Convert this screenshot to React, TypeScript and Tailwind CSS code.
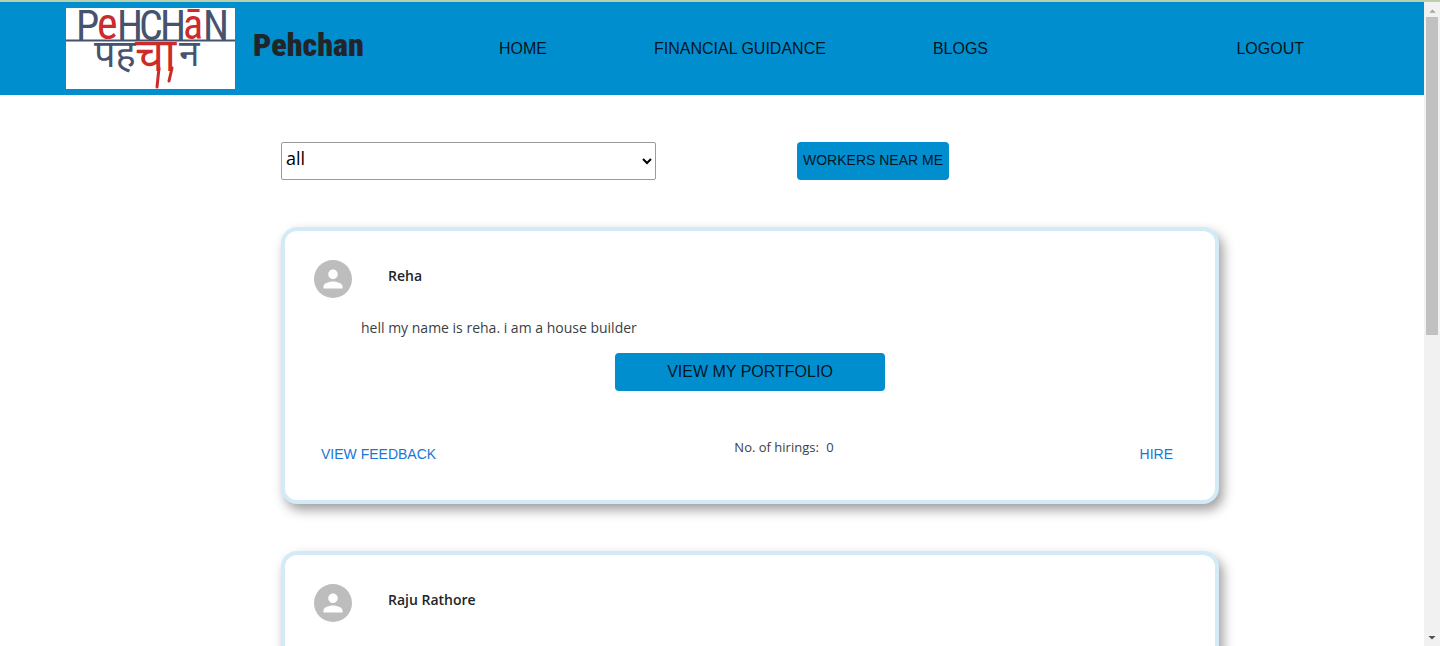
import React from "react";

type Worker = { name: string; bio: string; hirings: number };

const workers: Worker[] = [
  { name: "Reha", bio: "hell my name is reha. i am a house builder", hirings: 0 },
  { name: "Raju Rathore", bio: "", hirings: 0 },
];

function Logo() {
  return (
    <svg viewBox="0 0 169 81" className="h-[81px] w-[169px] shrink-0 overflow-visible bg-white" role="img" aria-label="Pehchan logo">
      <g fontFamily="'Roboto Condensed', Roboto, sans-serif" fontSize="42" fill="#46536f">
        <text x="10" y="32">P</text>
        <text x="31" y="31" fill="#cc2b2b" fontSize="44">e</text>
        <text x="51" y="32">H</text>
        <text x="73" y="32">C</text>
        <text x="94" y="32">H</text>
        <text x="117" y="31" fill="#cc2b2b" fontSize="42">ā</text>
        <text x="137" y="32">N</text>
      </g>
      <path d="M0 32.5H169" stroke="#46536f" strokeWidth="2" />
      <g fontFamily="'Noto Sans', sans-serif" fill="#46536f">
        <text x="28" y="59" fontSize="38">पह</text>
        <text x="69" y="63" fontSize="46" fill="#cc2b2b">चा</text>
        <text x="113" y="58" fontSize="37">न</text>
      </g>
      <path d="M93 60L91 79M106 60L103 73" fill="none" stroke="#cc2b2b" strokeWidth="3" strokeLinecap="round" />
    </svg>
  );
}

function Avatar() {
  return (
    <svg viewBox="0 0 40 40" className="size-[38px] shrink-0" aria-hidden="true">
      <circle cx="20" cy="20" r="20" fill="#bdbdbd" />
      <path
        transform="translate(5 5) scale(1.25)"
        fill="#fff"
        d="M12 12c2.21 0 4-1.79 4-4s-1.79-4-4-4-4 1.79-4 4 1.79 4 4 4zm0 2c-2.67 0-8 1.34-8 4v2h16v-2c0-2.66-5.33-4-8-4z"
      />
    </svg>
  );
}

function WorkerCard({ name, bio, hirings }: Worker) {
  return (
    <article className="flex min-h-[277px] shrink-0 flex-col rounded-2xl border-4 border-[#d2ebf7] bg-white px-[29px] pt-[29px] pb-[31px] shadow-[4px_6px_12px_rgba(0,0,0,0.38)]">
      <header className="flex gap-9">
        <Avatar />
        <h2 className="pt-1 text-sm leading-6 font-semibold text-[#212529]">{name}</h2>
      </header>
      <p className="min-h-6 pt-[18px] pl-[47px] text-sm leading-6 text-[#3a3f45]">{bio}</p>
      <button className="mt-[13px] h-[38px] w-[270px] self-center rounded bg-[#008ecf] font-['Liberation_Sans',Arial,sans-serif] text-base text-black/87">
        VIEW MY PORTFOLIO
      </button>
      <footer className="mt-auto grid grid-cols-3 items-center font-['Liberation_Sans',Arial,sans-serif] text-sm text-[#1976d2]">
        <button className="justify-self-start px-[7px]">VIEW FEEDBACK</button>
        <p className="pb-3 pl-[68px] text-center font-['Open_Sans',sans-serif] text-[13px] text-[#3a3f45]">
          No. of hirings: <span className="pl-1">{hirings}</span>
        </p>
        <button className="justify-self-end px-[13px]">HIRE</button>
      </footer>
    </article>
  );
}

function ScrollTrack() {
  return (
    <div className="flex w-4 shrink-0 flex-col items-center bg-[#f1f1f1]" aria-hidden="true">
      <svg viewBox="0 0 16 16" className="size-[15px]"><path d="M4.500 11.500h7L8 8z" fill="#a3a3a3" /></svg>
      <div className="h-[318px] w-3 bg-[#c1c1c1]" />
      <svg viewBox="0 0 16 16" className="mt-auto size-4"><path d="M4.500 6h7L8 9.500z" fill="#505050" /></svg>
    </div>
  );
}

export default function App() {
  return (
    <div className="flex h-screen flex-col overflow-hidden bg-white font-['Open_Sans',sans-serif]">
      <div className="h-0.5 shrink-0 bg-[#b9cfae]" />
      <div className="flex min-h-0 flex-1">
        <div className="flex min-w-0 flex-1 flex-col overflow-hidden">
          <header className="flex h-[93px] shrink-0 items-center bg-[#008ecf] pr-[120px] pl-[66px] font-['Liberation_Sans',Arial,sans-serif] text-base text-black/87">
            <Logo />
            <h1 className="w-[264px] pb-2 pl-[18px] font-['Roboto_Condensed',sans-serif] text-[32px] leading-10 font-black text-[#212529]">
              Pehchan
            </h1>
            <nav className="flex flex-1 gap-[107px]">
              <a href="#home">HOME</a>
              <a href="#guidance">FINANCIAL GUIDANCE</a>
              <a href="#blogs">BLOGS</a>
              <a href="#logout" className="ml-auto">LOGOUT</a>
            </nav>
          </header>
          <main className="ml-[281px] flex max-w-[938px] flex-col gap-[47px] pt-[47px]">
            <div className="flex items-center gap-[141px]">
              <select aria-label="Worker category" className="h-[38px] w-[375px] rounded-xs border border-[#9a9a9a] bg-white pb-1.5 text-lg text-black">
                <option>all</option>
              </select>
              <button className="h-[38px] rounded bg-[#008ecf] px-1.5 pb-0.5 font-['Liberation_Sans',Arial,sans-serif] text-sm text-black/87">
                WORKERS NEAR ME
              </button>
            </div>
            {workers.map((worker) => (
              <WorkerCard key={worker.name} {...worker} />
            ))}
          </main>
        </div>
        <ScrollTrack />
      </div>
    </div>
  );
}
